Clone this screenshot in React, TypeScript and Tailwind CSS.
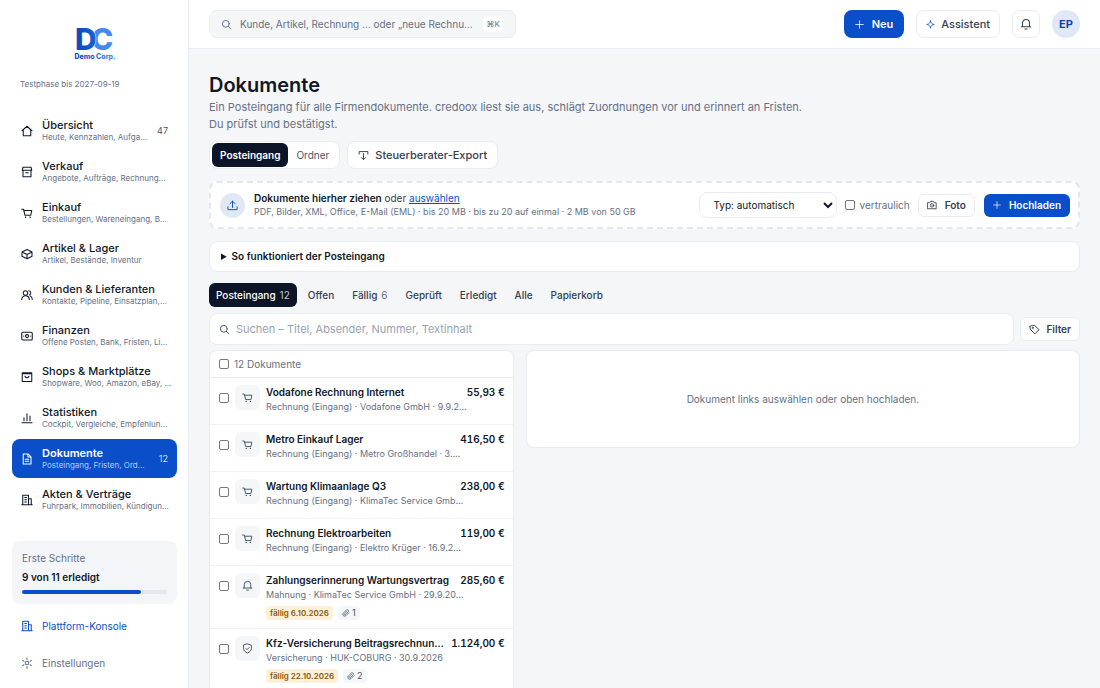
import { useState } from 'react';
import type { ReactNode } from 'react';
import clsx from 'clsx';

type IconName =
  | 'home'
  | 'archive'
  | 'cart'
  | 'box'
  | 'users'
  | 'cash'
  | 'shop'
  | 'chart'
  | 'file'
  | 'building'
  | 'gear'
  | 'search'
  | 'plus'
  | 'spark'
  | 'bell'
  | 'export'
  | 'upload'
  | 'camera'
  | 'tag'
  | 'shield'
  | 'clip';

const ICONS: Record<IconName, ReactNode> = {
  home: <path d="M2 11.5 12 2.500l10 9M4.500 9.500V21.500h15V9.500" />,
  archive: <path d="M4 2.500h16L21.500 8.500h-19zM4 8.500v13h16v-13M9.500 13.500h5" />,
  cart: (
    <>
      <path d="M1.500 4.500H5L8 16.500h11.500l2-9.500H5.600" />
      <path d="M9 20.500h.5M18 20.500h.5" strokeWidth="2.600" />
    </>
  ),
  box: <path d="M12 3 22 8v8.500L12 21.500 2 16.500V8zM2 8l10 5 10-5M12 13v8.500" />,
  users: (
    <>
      <circle cx="9" cy="8" r="4.500" />
      <path d="M1.500 21c0-4.500 3-7.500 7.500-7.500s7.500 3 7.500 7.500M15.500 3.500a4.500 4.500 0 0 1 1.500 8.500M18.500 14c2.500 1 4 3.500 4 7" />
    </>
  ),
  cash: (
    <>
      <rect x="1.500" y="4.500" width="21" height="15.500" rx="2" />
      <circle cx="12" cy="12.200" r="3" />
      <path d="M5.500 12.200h.1M18.500 12.200h.1" />
    </>
  ),
  shop: <path d="M2.500 3.500h19v17.500h-19zM2.500 5.500h19M8 10.500c1.500 4 6.500 4 8 0" />,
  chart: <path d="M2 21.500h20M6 17.500v-6M12 17.500V3.500M18 17.500V8" />,
  file: <path d="M4.500 2h10l5.500 5.500V22H4.500zM14 2v6h6M8.500 12.500h7M8.500 16.500h7" />,
  building: <path d="M1.500 21.500h21M3.500 21.500V2.500h11.500v19M15 9.500h5.500v12M7.500 7h3.500M7.500 11.500h3.500M7.500 16h3.500" />,
  gear: (
    <>
      <circle cx="12" cy="12" r="3.600" />
      <path d="M12 1.500v3.500M12 19v3.500M3 6.800l3 1.800M18 15.400l3 1.800M3 17.200l3-1.800M18 8.600l3-1.800" />
    </>
  ),
  search: (
    <>
      <circle cx="10.500" cy="10.500" r="7.500" />
      <path d="m16 16 5.500 5.500" />
    </>
  ),
  plus: <path d="M12 2v20M2 12h20" />,
  spark: <path d="M12 2c1.200 6.500 3.500 8.800 10 10-6.500 1.200-8.800 3.500-10 10-1.200-6.500-3.500-8.800-10-10 6.500-1.200 8.800-3.500 10-10z" />,
  bell: <path d="M2.500 17.500h19M5 17.500V10a7 7 0 0 1 14 0v7.500M10 22h4" />,
  export: <path d="M2.500 9V3.500h19V9M12 8v13M7.500 16.500 12 21l4.500-4.500" />,
  upload: <path d="M12 16.500V2.500M6.500 8 12 2.500 17.500 8M2 15v6h20v-6" />,
  camera: (
    <>
      <path d="M2 6.500h4.500l2-3.500h7l2 3.500H22V21H2z" />
      <circle cx="12" cy="13" r="4.200" />
      <path d="M12 13h.1" />
    </>
  ),
  tag: (
    <>
      <path d="M2.500 4.500 12.500 3 22 12.500 13 21.500 3.500 12.500z" />
      <circle cx="8" cy="8.500" r="1" />
    </>
  ),
  shield: <path d="M12 2 20.500 5v7c0 4.500-3.500 8-8.500 10-5-2-8.500-5.500-8.500-10V5zM8.500 12l2.500 2.500 4.500-4.500" />,
  clip: <path d="m21 11-9 9a5.500 5.500 0 0 1-8-8l9-8.700a3.800 3.800 0 0 1 5.400 5.400l-8.900 8.700a1.900 1.900 0 0 1-2.700-2.700l8-7.900" />,
};

function Icon({ name, className = 'size-3' }: { name: IconName; className?: string }) {
  return (
    <svg
      viewBox="0 0 24 24"
      fill="none"
      stroke="currentColor"
      strokeWidth="2.1"
      strokeLinejoin="round"
      strokeLinecap="round"
      aria-hidden="true"
      className={clsx('shrink-0', className)}
    >
      {ICONS[name]}
    </svg>
  );
}

interface NavEntry {
  icon: IconName;
  title: string;
  sub: string;
  count?: number;
}

const NAV: NavEntry[] = [
  { icon: 'home', title: 'Übersicht', sub: 'Heute, Kennzahlen, Aufga…', count: 47 },
  { icon: 'archive', title: 'Verkauf', sub: 'Angebote, Aufträge, Rechnung…' },
  { icon: 'cart', title: 'Einkauf', sub: 'Bestellungen, Wareneingang, B…' },
  { icon: 'box', title: 'Artikel & Lager', sub: 'Artikel, Bestände, Inventur' },
  { icon: 'users', title: 'Kunden & Lieferanten', sub: 'Kontakte, Pipeline, Einsatzplan,…' },
  { icon: 'cash', title: 'Finanzen', sub: 'Offene Posten, Bank, Fristen, Li…' },
  { icon: 'shop', title: 'Shops & Marktplätze', sub: 'Shopware, Woo, Amazon, eBay, …' },
  { icon: 'chart', title: 'Statistiken', sub: 'Cockpit, Vergleiche, Empfehlun…' },
  { icon: 'file', title: 'Dokumente', sub: 'Posteingang, Fristen, Ord…', count: 12 },
  { icon: 'building', title: 'Akten & Verträge', sub: 'Fuhrpark, Immobilien, Kündigun…' },
];

interface Doc {
  icon: IconName;
  title: string;
  meta: string;
  amount: string;
  due?: string;
  files?: number;
}

const DOCS: Doc[] = [
  { icon: 'cart', title: 'Vodafone Rechnung Internet', meta: 'Rechnung (Eingang) · Vodafone GmbH · 9.9.2…', amount: '55,93 €' },
  { icon: 'cart', title: 'Metro Einkauf Lager', meta: 'Rechnung (Eingang) · Metro Großhandel · 3.…', amount: '416,50 €' },
  { icon: 'cart', title: 'Wartung Klimaanlage Q3', meta: 'Rechnung (Eingang) · KlimaTec Service Gmb…', amount: '238,00 €' },
  { icon: 'cart', title: 'Rechnung Elektroarbeiten', meta: 'Rechnung (Eingang) · Elektro Krüger · 16.9.2…', amount: '119,00 €' },
  {
    icon: 'bell',
    title: 'Zahlungserinnerung Wartungsvertrag',
    meta: 'Mahnung · KlimaTec Service GmbH · 29.9.20…',
    amount: '285,60 €',
    due: 'fällig 6.10.2026',
    files: 1,
  },
  {
    icon: 'shield',
    title: 'Kfz-Versicherung Beitragsrechnun…',
    meta: 'Versicherung · HUK-COBURG · 30.9.2026',
    amount: '1.124,00 €',
    due: 'fällig 22.10.2026',
    files: 2,
  },
];

const FILTERS = [
  { label: 'Posteingang', count: 12 },
  { label: 'Offen' },
  { label: 'Fällig', count: 6 },
  { label: 'Geprüft' },
  { label: 'Erledigt' },
  { label: 'Alle' },
  { label: 'Papierkorb' },
];

const DONE = 9;
const STEPS = 11;

function Checkbox({ label }: { label: string }) {
  return (
    <input
      type="checkbox"
      aria-label={label}
      className="size-[10px] shrink-0 appearance-none rounded-xs border border-[#767676] bg-white checked:bg-[#0a4fc9]"
    />
  );
}

function Logo() {
  return (
    <svg viewBox="0 0 48 48" className="size-12" role="img" aria-label="Demo Corp." fontFamily="Inter, sans-serif">
      <defs>
        <linearGradient id="logo-d" x1="0" x2="1">
          <stop offset="0" stopColor="#0b47b8" />
          <stop offset="1" stopColor="#1763dc" />
        </linearGradient>
        <linearGradient id="logo-text" x1="0" x2="1">
          <stop offset="0" stopColor="#0b47b8" />
          <stop offset="1" stopColor="#4489ef" />
        </linearGradient>
      </defs>
      <text x="20" y="32" fontSize="30" fontWeight="800" fill="#4489ef">C</text>
      <text x="4" y="32" fontSize="30" fontWeight="800" fill="url(#logo-d)" stroke="#fff" strokeWidth="1" paintOrder="stroke">D</text>
      <text x="24" y="41" fontSize="7" fontWeight="800" textAnchor="middle" fill="url(#logo-text)">Demo Corp.</text>
    </svg>
  );
}

function Sidebar() {
  return (
    <aside className="flex w-[189px] shrink-0 flex-col border-r border-[#e9edf1] bg-white pr-[11px] pl-3">
      <div className="mt-[18px] flex justify-center">
        <Logo />
      </div>
      <p className="mt-3 px-2 text-[8px] leading-3 text-[#667085]">Testphase bis 2027-09-19</p>

      <nav className="mt-[21px]">
        {NAV.map((item) => {
          const active = item.title === 'Dokumente';
          return (
            <a
              key={item.title}
              href="#"
              className={clsx(
                'mb-0.5 flex h-[39px] items-center gap-[9px] rounded-lg px-[9px]',
                active ? 'bg-[#0a4fc9] text-white' : 'text-[#101828]',
              )}
            >
              <Icon name={item.icon} />
              <span className="min-w-0 flex-1">
                <span className={clsx('block text-[11px] leading-[14px]', active ? 'font-semibold' : 'font-medium')}>
                  {item.title}
                </span>
                <span
                  className={clsx(
                    'block text-[8px] leading-[11px] whitespace-nowrap',
                    active ? 'text-[#b5cbf3]' : 'text-[#667085]',
                  )}
                >
                  {item.sub}
                </span>
              </span>
              {item.count && (
                <span className={clsx('text-[9px]', active ? 'text-[#d3e0f8]' : 'text-[#475467]')}>{item.count}</span>
              )}
            </a>
          );
        })}
      </nav>

      <div className="mt-5 rounded-lg bg-[#f3f5f8] px-[10px] pt-[9px] pb-[10px]">
        <p className="text-[10px] leading-4 text-[#667085]">Erste Schritte</p>
        <p className="mt-[3px] text-[10px] leading-4 font-semibold text-[#101828]">
          {DONE} von {STEPS} erledigt
        </p>
        <div className="mt-[5px] h-1 rounded-full bg-[#e4e8ee]">
          <div className="h-full rounded-full bg-[#0a4fc9]" style={{ width: `${(DONE / STEPS) * 100}%` }} />
        </div>
      </div>

      <a href="#" className="mt-3 flex h-5 items-center gap-[9px] px-[9px] text-[10px] text-[#0a4fc9]">
        <Icon name="building" />
        Plattform-Konsole
      </a>
      <a href="#" className="mt-[17px] flex h-5 items-center gap-[9px] px-[9px] text-[10px] text-[#667085]">
        <Icon name="gear" />
        Einstellungen
      </a>
    </aside>
  );
}

function Topbar() {
  return (
    <header className="flex h-[49px] shrink-0 items-center border-b border-[#e9edf1] bg-white px-5">
      <button className="flex h-7 w-[307px] items-center rounded-lg border border-[#e9edf1] bg-[#f4f6f8] px-[11px] text-[10px] text-[#667085]">
        <Icon name="search" className="size-[11px]" />
        <span className="ml-2 flex-1 text-left whitespace-nowrap">Kunde, Artikel, Rechnung … oder „neue Rechnu…</span>
        <kbd className="rounded-sm bg-white px-1 font-[Inter] text-[8px] leading-4">⌘K</kbd>
      </button>
      <div className="ml-auto flex items-center gap-3 text-[11px] font-semibold">
        <button className="flex h-7 items-center gap-2 rounded-lg bg-[#0a4fc9] px-[11px] text-white">
          <Icon name="plus" className="size-[9px]" />
          Neu
        </button>
        <button className="flex h-7 items-center gap-[6px] rounded-lg border border-[#e9edf1] bg-white px-[9px] font-medium text-[#344054]">
          <Icon name="spark" className="size-[9px] text-[#0a4fc9]" />
          Assistent
        </button>
        <button
          aria-label="Benachrichtigungen"
          className="flex size-7 items-center justify-center rounded-lg border border-[#e9edf1] text-[#344054]"
        >
          <Icon name="bell" className="size-3" />
        </button>
        <button className="size-7 rounded-full bg-[#e0e8f6] font-bold text-[#0b45a8]">EP</button>
      </div>
    </header>
  );
}

function UploadZone() {
  return (
    <section className="mt-3 flex h-12 items-center rounded-lg border-2 border-dashed border-[#e4e8ec] bg-white px-2">
      <span className="ml-px flex size-[25px] shrink-0 items-center justify-center rounded-full bg-[#e0e8f6] text-[#0a4fc9]">
        <Icon name="upload" className="size-[11px]" />
      </span>
      <div className="ml-[9px] min-w-0 flex-1">
        <p className="text-[10px] leading-[14px] text-[#344054]">
          <strong className="font-semibold text-[#101828]">Dokumente hierher ziehen</strong> oder{' '}
          <a href="#" className="text-[#0a4fc9] underline">
            auswählen
          </a>
        </p>
        <p className="text-[9px] leading-[14px] text-[#667085]">
          PDF, Bilder, XML, Office, E-Mail (EML) · bis 20 MB · bis zu 20 auf einmal · 2 MB von 50 GB
        </p>
      </div>
      <select
        aria-label="Dokumenttyp"
        className="h-[26px] w-[138px] rounded-lg border border-[#e9edf1] bg-white px-[9px] text-[10px] text-[#101828]"
      >
        <option>Typ: automatisch</option>
      </select>
      <label className="ml-2 flex items-center gap-1 text-[10px] text-[#667085]">
        <Checkbox label="vertraulich" />
        vertraulich
      </label>
      <button className="ml-2 flex h-[23px] items-center gap-2 rounded-md border border-[#e9edf1] px-2 text-[10px] font-semibold text-[#344054]">
        <Icon name="camera" className="size-[10px]" />
        Foto
      </button>
      <button className="ml-[9px] flex h-[23px] items-center gap-2 rounded-md bg-[#0a4fc9] px-[9px] text-[10px] font-semibold text-white">
        <Icon name="plus" className="size-2" />
        Hochladen
      </button>
    </section>
  );
}

function DocRow({ doc }: { doc: Doc }) {
  return (
    <li className="flex min-h-[47px] border-b border-[#eff2f5] pt-[7px] pr-2 pb-2 pl-[9px]">
      <div className="flex h-[25px] items-center">
        <Checkbox label={doc.title} />
      </div>
      <span className="ml-[6px] flex size-[25px] shrink-0 items-center justify-center rounded-md bg-[#f4f6f8] text-[#475467]">
        <Icon name={doc.icon} className="size-[11px]" />
      </span>
      <div className="ml-[6px] min-w-0 flex-1">
        <div className="flex items-center justify-between text-[10px] leading-[15px] font-semibold text-[#101828]">
          <span className="whitespace-nowrap">{doc.title}</span>
          <span className="whitespace-nowrap tabular-nums">{doc.amount}</span>
        </div>
        <p className="text-[9px] leading-[14px] whitespace-nowrap text-[#667085]">{doc.meta}</p>
        {doc.due && (
          <div className="mt-1 flex gap-[5px] text-[8px] leading-[14px]">
            <span className="rounded-sm bg-[#fdf0d9] px-1 font-semibold text-[#8a5a0b]">{doc.due}</span>
            <span className="flex items-center gap-0.5 rounded-sm bg-[#f4f6f8] px-1 text-[9px] text-[#475467]">
              <Icon name="clip" className="size-2" />
              {doc.files}
            </span>
          </div>
        )}
      </div>
    </li>
  );
}

export default function App() {
  const [filter, setFilter] = useState('Posteingang');
  const [query, setQuery] = useState('');

  return (
    <div className="flex h-screen overflow-hidden bg-[#f4f6f8] font-[Inter,sans-serif] text-[#101828]">
      <Sidebar />
      <div className="flex min-w-0 flex-1 flex-col">
        <Topbar />
        <main className="min-h-0 flex-1 overflow-y-auto px-5 pt-[22px] [scrollbar-width:none]">
          <h1 className="text-xl leading-7 font-semibold">Dokumente</h1>
          <p className="max-w-[600px] text-[11px] leading-[17px] text-[#667085]">
            Ein Posteingang für alle Firmendokumente. credoox liest sie aus, schlägt Zuordnungen vor und erinnert an
            Fristen. Du prüfst und bestätigst.
          </p>

          <div className="mt-2 flex gap-[7px]">
            <div className="flex rounded-lg border border-[#e9edf1] bg-white px-[2px] py-px text-[10px]">
              <button className="h-6 rounded-md bg-[#0c1428] px-2 font-semibold text-white">Posteingang</button>
              <button className="h-6 px-2 text-[#475467]">Ordner</button>
            </div>
            <button className="flex items-center gap-[6px] rounded-lg border border-[#e9edf1] bg-white px-[10px] text-[11px] font-medium text-[#344054]">
              <Icon name="export" className="size-[11px]" />
              Steuerberater-Export
            </button>
          </div>

          <UploadZone />

          <details className="mt-3 rounded-lg border border-[#e9edf1] bg-white px-[11px] text-[10px] font-semibold">
            <summary className="leading-[29px]">So funktioniert der Posteingang</summary>
          </details>

          <div className="mt-[11px] flex gap-1 text-[10px] font-medium text-[#344054]">
            {FILTERS.map((f) => (
              <button
                key={f.label}
                onClick={() => setFilter(f.label)}
                className={clsx('h-6 rounded-md px-[7px]', filter === f.label && 'bg-[#0c1428] text-white')}
              >
                {f.label}
                {f.count && <span className="ml-1 font-normal opacity-75">{f.count}</span>}
              </button>
            ))}
          </div>

          <div className="mt-[6px] flex items-center gap-[6px]">
            <label className="flex h-8 flex-1 items-center rounded-lg border border-[#e9edf1] bg-white px-[9px] text-[#475467]">
              <Icon name="search" className="size-[11px]" />
              <input
                type="text"
                aria-label="Dokumente suchen"
                value={query}
                onChange={(e) => setQuery(e.target.value)}
                placeholder="Suchen – Titel, Absender, Nummer, Textinhalt"
                className="ml-[6px] min-w-0 flex-1 text-[11px] outline-none placeholder:text-[#98a2b3]"
              />
            </label>
            <button className="flex h-6 items-center gap-[6px] rounded-md border border-[#e9edf1] bg-white px-2 text-[10px] font-semibold text-[#344054]">
              <Icon name="tag" className="size-[11px]" />
              Filter
            </button>
          </div>

          <div className="mt-[5px] grid grid-cols-[11fr_20fr] items-start gap-3">
            <section className="min-w-0 rounded-lg border border-[#e9edf1] bg-white">
              <label className="flex h-[27px] items-center gap-[5px] border-b border-[#e9edf1] px-[9px] text-[10px] text-[#667085]">
                <Checkbox label="Alle auswählen" />
                12 Dokumente
              </label>
              <ul>
                {DOCS.map((doc) => (
                  <DocRow key={doc.title} doc={doc} />
                ))}
              </ul>
            </section>
            <section className="rounded-lg border border-[#e9edf1] bg-white py-10 text-center text-[10px] leading-4 text-[#667085]">
              Dokument links auswählen oder oben hochladen.
            </section>
          </div>
        </main>
      </div>
    </div>
  );
}
